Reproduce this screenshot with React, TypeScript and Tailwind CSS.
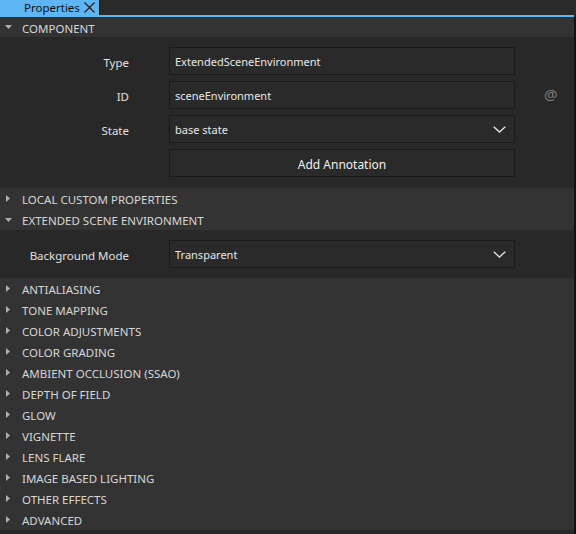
import React from 'react'

const font = { fontFamily: '"Noto Sans", "Open Sans", sans-serif' }

function Caret({ open }: { open: boolean }) {
  return open ? (
    <svg width="7" height="4" viewBox="0 0 7 4" className="shrink-0">
      <path d="M0 0 H7 L3.5 4 Z" fill="#b0b0b0" />
    </svg>
  ) : (
    <svg width="4" height="7" viewBox="0 0 4 7" className="shrink-0 ml-px">
      <path d="M0 0 V7 L4 3.5 Z" fill="#b0b0b0" />
    </svg>
  )
}

function SectionHeader({ title, open = false, h = 'h-[21px]' }: { title: string; open?: boolean; h?: string }) {
  return (
    <div className={`${h} bg-[#333333] flex items-center`}>
      <div className="w-[22px] pl-[5px] flex items-center">
        <Caret open={open} />
      </div>
      <span className="text-[11.5px] text-[#d6d6d6] pt-[3px]">{title}</span>
    </div>
  )
}

function Chevron() {
  return (
    <svg width="13" height="7" viewBox="0 0 13 7" className="shrink-0">
      <path d="M0.7 0.7 L6.5 6 L12.3 0.7" fill="none" stroke="#e6e6e6" strokeWidth="1.3" />
    </svg>
  )
}

function Field({ value, combo = false }: { value: string; combo?: boolean }) {
  return (
    <div className="h-[28px] w-[346px] bg-[#2a2a2a] border border-[#1a1a1a] flex items-center justify-between pl-[5px] pr-[8px]">
      <span className="text-[11px] text-[#e8e8e8] pt-[3px]">{value}</span>
      {combo && <Chevron />}
    </div>
  )
}

function Row({ label, children, extra }: { label: string; children: React.ReactNode; extra?: React.ReactNode }) {
  return (
    <div className="flex items-center">
      <div className="w-[129px] text-right text-[11.5px] text-[#e0e0e0] pt-[3px]">{label}</div>
      <div className="ml-[40px]">{children}</div>
      {extra}
    </div>
  )
}

const collapsed = [
  'ANTIALIASING',
  'TONE MAPPING',
  'COLOR ADJUSTMENTS',
  'COLOR GRADING',
  'AMBIENT OCCLUSION (SSAO)',
  'DEPTH OF FIELD',
  'GLOW',
  'VIGNETTE',
  'LENS FLARE',
  'IMAGE BASED LIGHTING',
  'OTHER EFFECTS',
  'ADVANCED',
]

export default function App() {
  return (
    <div className="w-[576px] h-[534px] bg-[#282828] flex flex-col overflow-hidden" style={font}>
      {/* Tab bar */}
      <div className="h-[15px] flex bg-[#2a2a2a]">
        <div className="w-[100px] bg-[#5db6f2] border-r border-[#111111] flex items-center pl-[24px] pr-[4px] justify-between">
          <span className="text-[11.5px] text-[#111111] leading-none">Properties</span>
          <svg width="11" height="11" viewBox="0 0 11 11">
            <path d="M0.5 0.5 L10.5 10.5 M10.5 0.5 L0.5 10.5" stroke="#1a1a1a" strokeWidth="1.1" />
          </svg>
        </div>
      </div>
      <div className="h-[2px] w-[574px] bg-[#5db6f2]" />

      <div className="flex-1 flex flex-col border-r-2 border-[#121212]">
        <SectionHeader title="COMPONENT" open h="h-[20px]" />
        <div className="flex flex-col gap-[6px] pt-[10px] pb-[11px]">
          <Row label="Type">
            <Field value="ExtendedSceneEnvironment" />
          </Row>
          <Row
            label="ID"
            extra={<span className="ml-[29px] text-[15px] text-[#7d7d7d] -mt-[2px]">@</span>}
          >
            <Field value="sceneEnvironment" />
          </Row>
          <Row label="State">
            <Field value="base state" combo />
          </Row>
          <Row label="">
            <div className="h-[28px] w-[346px] bg-[#2a2a2a] border border-[#1a1a1a] flex items-center justify-center">
              <span className="text-[12px] text-[#f0f0f0] pt-[3px]">Add Annotation</span>
            </div>
          </Row>
        </div>

        <SectionHeader title="LOCAL CUSTOM PROPERTIES" />
        <SectionHeader title="EXTENDED SCENE ENVIRONMENT" open />
        <div className="py-[10px]">
          <Row label="Background Mode">
            <Field value="Transparent" combo />
          </Row>
        </div>

        {collapsed.map(t => (
          <SectionHeader key={t} title={t} />
        ))}
      </div>
    </div>
  )
}
